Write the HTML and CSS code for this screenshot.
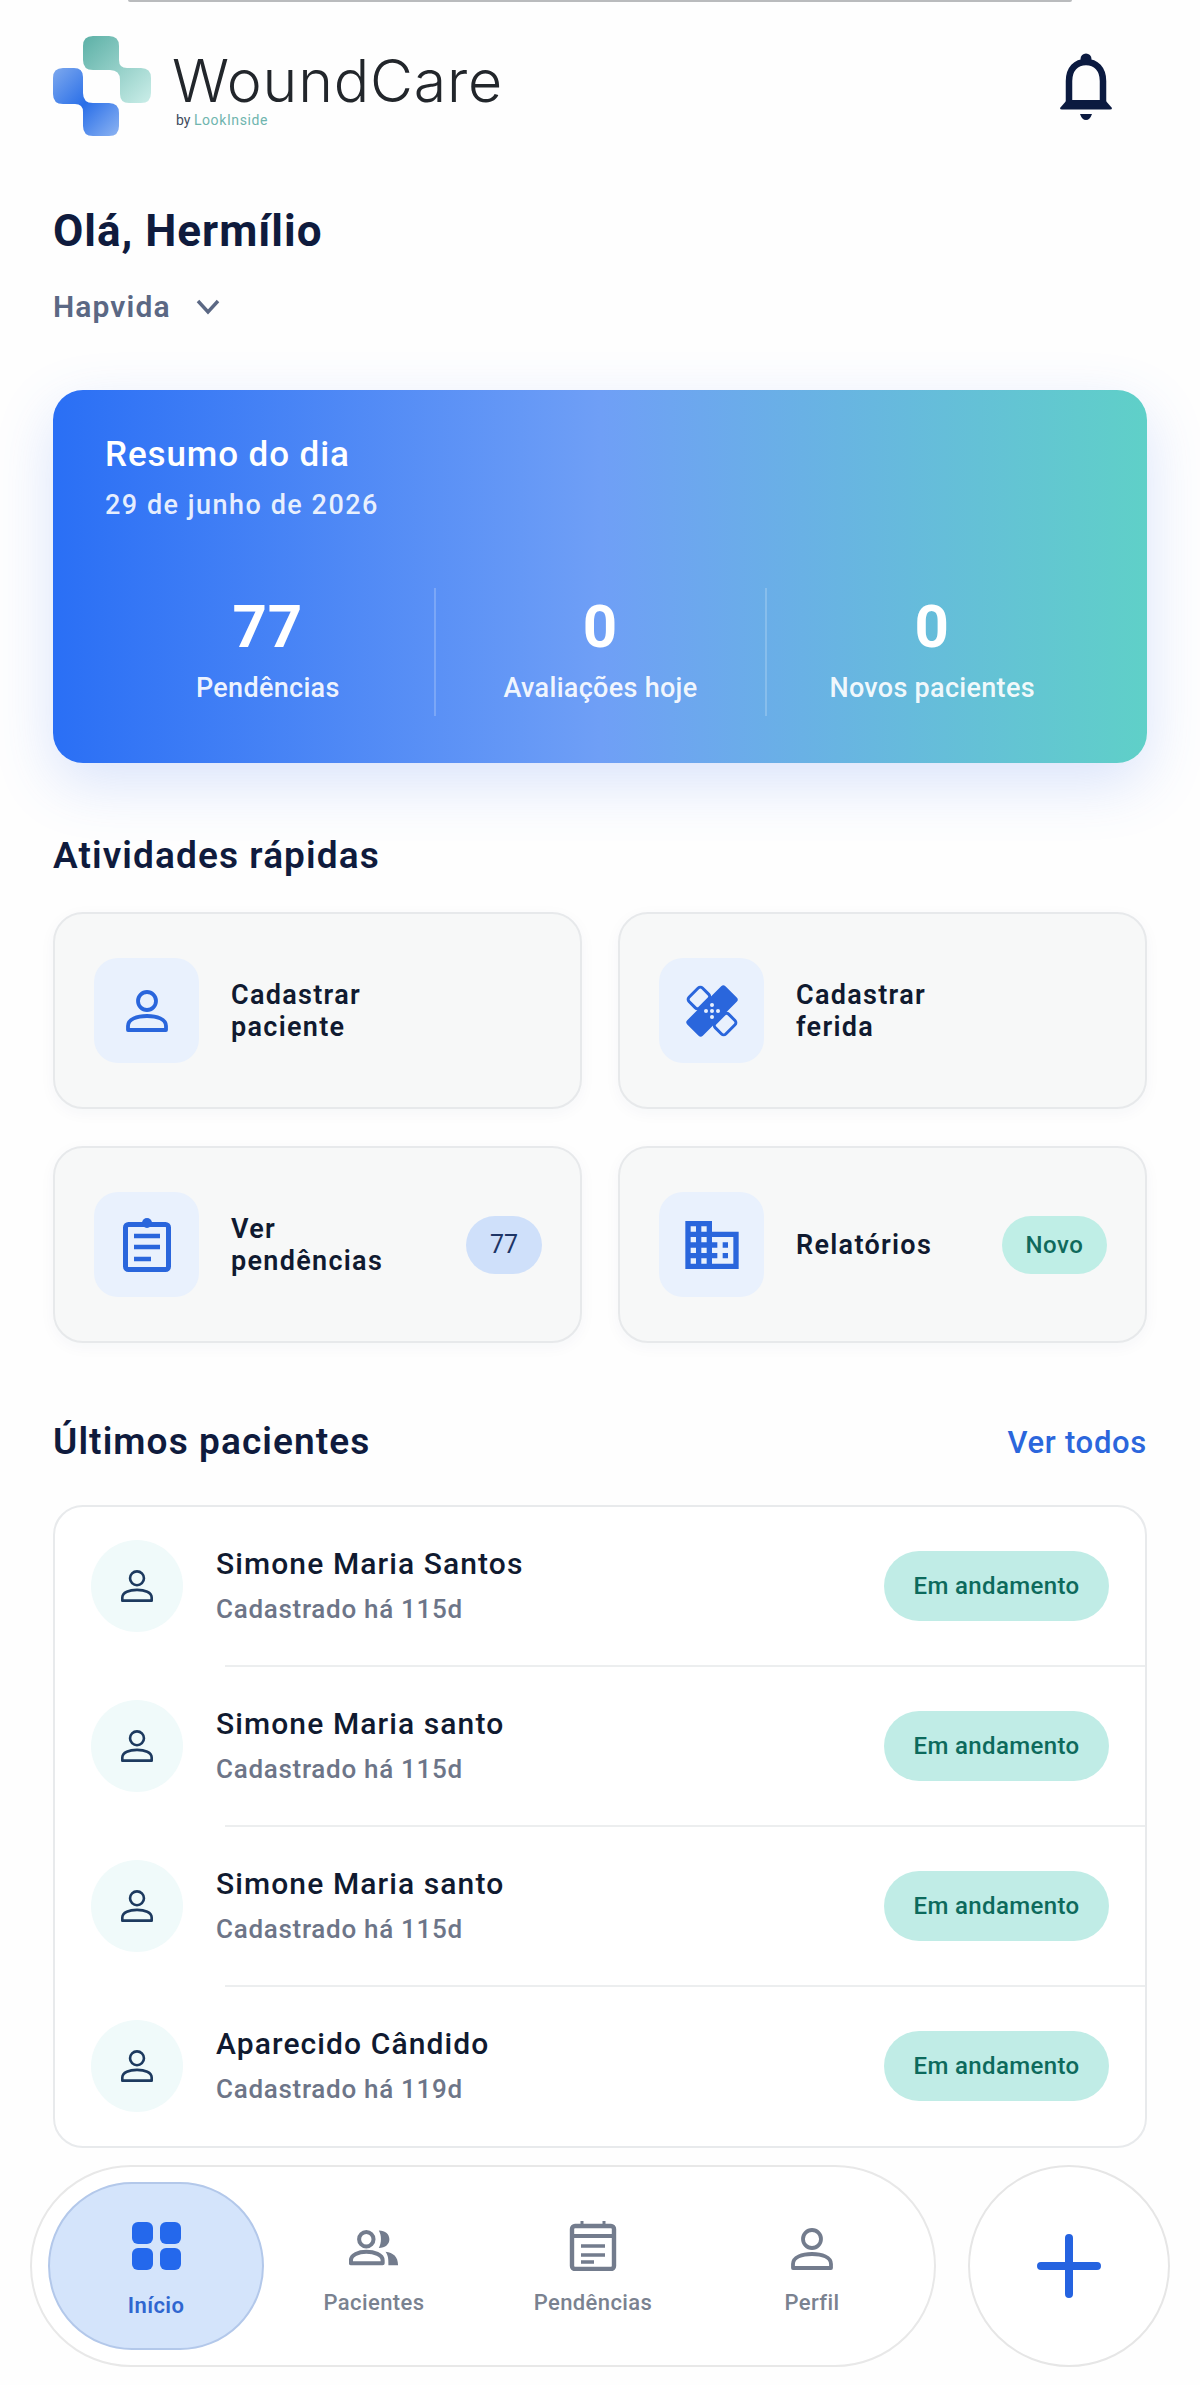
FILE: index.html
```html
<!DOCTYPE html>
<html lang="pt-BR">
<head>
  <meta charset="UTF-8" />
  <title>WoundCare</title>
  <link rel="stylesheet" href="styles.css">
</head>
<body>
  <svg class="defs" width="0" height="0">
    <defs>
      <linearGradient id="logoTeal" x1="0" y1="0" x2="1" y2="1">
        <stop offset="0" stop-color="#5cb0a6" />
        <stop offset="1" stop-color="#cbeee9" />
      </linearGradient>
      <linearGradient id="logoBlue" x1="0" y1="0" x2="1" y2="1">
        <stop offset="0" stop-color="#7ea9ee" />
        <stop offset="0.5" stop-color="#2a6fe8" />
        <stop offset="1" stop-color="#8db4f2" />
      </linearGradient>
      <symbol id="person" viewBox="0 0 44 44">
        <circle cx="22" cy="12" r="9" fill="none" stroke="currentColor" />
        <path d="M3 41V37C3 30 12 27 22 27C32 27 41 30 41 37V41Z" fill="none" stroke="currentColor" stroke-linejoin="round" />
      </symbol>
    </defs>
  </svg>

  <div class="top-sliver"></div>

  <main class="page">
    <header class="top">
      <div class="brand">
        <svg class="logo" viewBox="0 0 98 100">
          <path fill="url(#logoTeal)" d="M30 10Q30 0 40 0H56Q66 0 66 10V24Q66 32 74 32H88Q98 32 98 42V57Q98 67 88 67H76Q67 67 67 58V44Q67 34 57 34H40Q30 34 30 24Z" />
          <path fill="url(#logoBlue)" d="M0 42Q0 32 10 32H21Q30 32 30 41V57Q30 67 40 67H56Q66 67 66 77V90Q66 100 56 100H40Q30 100 30 90V76Q30 68 22 68H10Q0 68 0 58Z" />
        </svg>
        <div class="brand-text">
          <div class="brand-name">WoundCare</div>
          <div class="brand-by">by <span>LookInside</span></div>
        </div>
      </div>
      <svg class="bell" viewBox="0 0 52 67">
        <circle cx="26" cy="6" r="5.5" fill="#0b1a40" />
        <path d="M9 52V28C9 16 16 9 26 9C36 9 43 16 43 28V52" fill="none" stroke="#0b1a40" stroke-width="6.5" />
        <path d="M0 55L7 47H45L52 55Q52 56.500 50 56.500H2Q0 56.500 0 55Z" fill="#0b1a40" />
        <path d="M20 61H32Q30 67 26 67Q22 67 20 61Z" fill="#0b1a40" />
      </svg>
    </header>

    <h1 class="greeting">Olá, Hermílio</h1>
    <div class="company">
      <span>Hapvida</span>
      <svg class="chevron" viewBox="0 0 24 16"><path d="M2 2L12 13L22 2" fill="none" stroke="#5b6884" stroke-width="3.4" /></svg>
    </div>

    <section class="hero">
      <div class="hero-title">Resumo do dia</div>
      <div class="hero-date">29 de junho de 2026</div>
      <div class="stats">
        <div class="stat">
          <div class="stat-num">77</div>
          <div class="stat-label">Pendências</div>
        </div>
        <div class="stat">
          <div class="stat-num">0</div>
          <div class="stat-label">Avaliações hoje</div>
        </div>
        <div class="stat">
          <div class="stat-num">0</div>
          <div class="stat-label">Novos pacientes</div>
        </div>
      </div>
    </section>

    <h2 class="section-title quick-title">Atividades rápidas</h2>
    <div class="quick-grid">
      <div class="quick-card">
        <div class="quick-icon"><svg class="ic-person"><use href="#person" /></svg></div>
        <div class="quick-text">Cadastrar<br>paciente</div>
      </div>
      <div class="quick-card">
        <div class="quick-icon">
          <svg class="ic-bandage" viewBox="-27 -27 54 54">
            <g transform="rotate(45)">
              <rect x="-26" y="-9.500" width="15" height="19" rx="3" fill="none" stroke="#2a66dc" stroke-width="3" />
              <rect x="11" y="-9.500" width="15" height="19" rx="3" fill="none" stroke="#2a66dc" stroke-width="3" />
            </g>
            <g transform="rotate(-45)">
              <rect x="-27" y="-11" width="54" height="22" rx="3" fill="#2a66dc" />
            </g>
            <g fill="#e8f0fd">
              <circle cx="0" cy="-6" r="2" /><circle cx="-6" cy="0" r="2" /><circle cx="6" cy="0" r="2" />
              <circle cx="0" cy="6" r="2" /><circle cx="0" cy="0" r="2" />
            </g>
          </svg>
        </div>
        <div class="quick-text">Cadastrar<br>ferida</div>
      </div>
      <div class="quick-card">
        <div class="quick-icon">
          <svg class="ic-clip" viewBox="0 0 48 54">
            <rect x="2.500" y="6.500" width="43" height="45" rx="3" fill="none" stroke="#2a66dc" stroke-width="5" />
            <circle cx="24" cy="5" r="5" fill="#2a66dc" />
            <path d="M11 18H37M11 29H37M11 41H28" fill="none" stroke="#2a66dc" stroke-width="4.500" />
          </svg>
        </div>
        <div class="quick-text">Ver<br>pendências</div>
        <div class="badge badge-blue">77</div>
      </div>
      <div class="quick-card">
        <div class="quick-icon">
          <svg class="ic-domain" viewBox="2 3 20 18"><path fill="#2a66dc" d="M12 7V3H2v18h20V7H12zM6 19H4v-2h2v2zm0-4H4v-2h2v2zm0-4H4V9h2v2zm0-4H4V5h2v2zm4 12H8v-2h2v2zm0-4H8v-2h2v2zm0-4H8V9h2v2zm0-4H8V5h2v2zm10 12h-8v-2h2v-2h-2v-2h2v-2h-2V9h8v10zm-2-8h-2v2h2v-2zm0 4h-2v2h2v-2z" /></svg>
        </div>
        <div class="quick-text">Relatórios</div>
        <div class="badge badge-green">Novo</div>
      </div>
    </div>

    <div class="list-head">
      <h2 class="section-title">Últimos pacientes</h2>
      <span class="see-all">Ver todos</span>
    </div>
    <div class="patients">
      <div class="patient">
        <div class="avatar"><svg class="ic-avatar"><use href="#person" /></svg></div>
        <div class="patient-info">
          <div class="patient-name">Simone Maria Santos</div>
          <div class="patient-sub">Cadastrado há 115d</div>
        </div>
        <div class="status">Em andamento</div>
      </div>
      <div class="divider"></div>
      <div class="patient">
        <div class="avatar"><svg class="ic-avatar"><use href="#person" /></svg></div>
        <div class="patient-info">
          <div class="patient-name">Simone Maria santo</div>
          <div class="patient-sub">Cadastrado há 115d</div>
        </div>
        <div class="status">Em andamento</div>
      </div>
      <div class="divider"></div>
      <div class="patient">
        <div class="avatar"><svg class="ic-avatar"><use href="#person" /></svg></div>
        <div class="patient-info">
          <div class="patient-name">Simone Maria santo</div>
          <div class="patient-sub">Cadastrado há 115d</div>
        </div>
        <div class="status">Em andamento</div>
      </div>
      <div class="divider"></div>
      <div class="patient">
        <div class="avatar"><svg class="ic-avatar"><use href="#person" /></svg></div>
        <div class="patient-info">
          <div class="patient-name">Aparecido Cândido</div>
          <div class="patient-sub">Cadastrado há 119d</div>
        </div>
        <div class="status">Em andamento</div>
      </div>
    </div>
  </main>

  <nav class="bottom">
    <div class="tabs">
      <div class="tab tab-active">
        <svg class="tab-icon" viewBox="0 0 50 50">
          <rect x="1" y="1" width="21" height="22" rx="6" fill="#2468ec" />
          <rect x="29" y="1" width="21" height="22" rx="6" fill="#2468ec" />
          <rect x="1" y="27" width="21" height="22" rx="6" fill="#2468ec" />
          <rect x="29" y="27" width="21" height="22" rx="6" fill="#2468ec" />
        </svg>
        <div class="tab-label">Início</div>
      </div>
      <div class="tab">
        <svg class="tab-icon" viewBox="0 0 52 50">
          <circle cx="18" cy="18" r="7.500" fill="none" stroke="#737c8d" stroke-width="4.200" />
          <path d="M2 43V40C2 34 10 31 18 31C26 31 35 34 35 40V43Z" fill="none" stroke="#737c8d" stroke-width="4.200" stroke-linejoin="round" />
          <path d="M31 9C38 9 42 13 42 18C42 23 38 27 31 27C34 22 34 14 31 9Z" fill="#737c8d" />
          <path d="M38 31C46 32 51 36 51 45H41C41 39 41 35 38 31Z" fill="#737c8d" />
        </svg>
        <div class="tab-label">Pacientes</div>
      </div>
      <div class="tab">
        <svg class="tab-icon" viewBox="0 0 46 50">
          <rect x="2" y="5" width="42" height="43" rx="3" fill="none" stroke="#737c8d" stroke-width="4.400" />
          <path d="M2 15H44" fill="none" stroke="#737c8d" stroke-width="4" />
          <path d="M12 0V6M34 0V6" fill="none" stroke="#737c8d" stroke-width="3" />
          <path d="M11 25H35M11 34H35M11 41H24" fill="none" stroke="#737c8d" stroke-width="3.400" />
        </svg>
        <div class="tab-label">Pendências</div>
      </div>
      <div class="tab">
        <svg class="ic-tab-person"><use href="#person" /></svg>
        <div class="tab-label">Perfil</div>
      </div>
    </div>
    <div class="add-btn">
      <svg class="ic-plus" viewBox="0 0 64 64"><path d="M32 4V60M4 32H60" fill="none" stroke="#2563e0" stroke-width="8" stroke-linecap="round" /></svg>
    </div>
  </nav>
</body>
</html>
```

FILE: styles.css
```css
* {
  box-sizing: border-box;
}

body {
  margin: 0;
  background: #fefefe;
  color: #0f1b3d;
  font-family: Roboto, "Liberation Sans", sans-serif;
}

.defs {
  display: block;
  height: 0;
}

.top-sliver {
  height: 2px;
  margin: 0 128px;
  background: #b9bbbd;
  border-radius: 0 0 4px 4px;
}

.page {
  padding: 0 53px;
}

.top {
  display: flex;
  align-items: center;
  justify-content: space-between;
  height: 100px;
  margin-top: 34px;
}

.brand {
  display: flex;
  align-items: flex-start;
  gap: 21px;
}

.logo {
  width: 98px;
  height: 100px;
  flex: none;
}

.brand-text {
  padding-top: 15px;
}

.brand-name {
  font-family: Inter, sans-serif;
  font-size: 59px;
  font-weight: 300;
  line-height: 60px;
  letter-spacing: 0.8px;
  color: #22262b;
}

.brand-by {
  margin: 1px 0 0 4px;
  font-size: 14px;
  line-height: 16px;
  color: #3f4b5c;
}

.brand-by span {
  color: #6fb5ae;
  letter-spacing: 0.6px;
}

.bell {
  width: 52px;
  height: 67px;
  margin-right: 35px;
}

.greeting {
  margin: 70px 0 0;
  font-size: 44px;
  font-weight: 700;
  line-height: 50px;
  letter-spacing: 1px;
}

.company {
  display: flex;
  align-items: center;
  gap: 25px;
  margin-top: 33px;
  font-size: 30px;
  font-weight: 600;
  line-height: 36px;
  letter-spacing: 1.1px;
  color: #5b6884;
}

.chevron {
  width: 24px;
  height: 16px;
}

.hero {
  height: 373px;
  margin-top: 65px;
  padding: 46px 50px 0 52px;
  border-radius: 30px;
  background: linear-gradient(90deg, #2a6ff5 0%, #6f9ff6 50%, #5fd0c8 100%);
  box-shadow: 0 20px 60px rgba(70, 120, 240, 0.2);
  color: #fff;
}

.hero-title {
  font-size: 35px;
  font-weight: 500;
  line-height: 38px;
  letter-spacing: 0.9px;
}

.hero-date {
  margin-top: 16px;
  font-size: 27px;
  font-weight: 500;
  line-height: 30px;
  letter-spacing: 1.5px;
  color: rgba(255, 255, 255, 0.88);
}

.stats {
  display: grid;
  grid-template-columns: repeat(3, 1fr);
  height: 128px;
  margin: 68px 0 0 -3px;
}

.stat {
  padding-top: 4px;
  text-align: center;
}

.stat + .stat {
  border-left: 2px solid rgba(255, 255, 255, 0.2);
}

.stat-num {
  font-size: 60px;
  font-weight: 700;
  line-height: 70px;
  letter-spacing: 1px;
}

.stat-label {
  margin-top: 10px;
  font-size: 27px;
  font-weight: 500;
  line-height: 32px;
  letter-spacing: 0.3px;
  color: rgba(255, 255, 255, 0.92);
}

.section-title {
  margin: 0;
  font-size: 37px;
  font-weight: 600;
  line-height: 44px;
  letter-spacing: 1.1px;
}

.quick-title {
  margin-top: 71px;
}

.quick-grid {
  display: grid;
  grid-template-columns: 1fr 1fr;
  gap: 37px 36px;
  margin-top: 34px;
}

.quick-card {
  display: flex;
  align-items: center;
  gap: 32px;
  height: 197px;
  padding: 0 38px 0 39px;
  border: 2px solid #e7e9eb;
  border-radius: 30px;
  background: #f7f8f8;
  box-shadow: 0 4px 16px rgba(30, 50, 90, 0.04);
}

.quick-icon {
  display: flex;
  align-items: center;
  justify-content: center;
  width: 105px;
  height: 105px;
  flex: none;
  border-radius: 24px;
  background: #e9f1fd;
}

.ic-person {
  width: 44px;
  height: 44px;
  color: #2a66dc;
  stroke-width: 3.8;
}

.ic-bandage {
  width: 54px;
  height: 54px;
}

.ic-clip {
  width: 48px;
  height: 54px;
}

.ic-domain {
  width: 54px;
  height: 48px;
}

.quick-text {
  flex: 1;
  font-size: 27px;
  font-weight: 600;
  line-height: 32px;
  letter-spacing: 1.3px;
  color: #101a30;
}

.badge {
  display: flex;
  align-items: center;
  justify-content: center;
  height: 58px;
  border-radius: 29px;
  font-size: 25px;
}

.badge-blue {
  width: 76px;
  background: #cfe0fa;
  color: #1d3566;
  font-weight: 400;
}

.badge-green {
  width: 105px;
  background: #bfeee6;
  color: #0f6a5c;
  font-weight: 500;
  font-size: 24px;
  letter-spacing: 0.5px;
}

.list-head {
  display: flex;
  align-items: center;
  justify-content: space-between;
  margin-top: 77px;
}

.see-all {
  font-size: 31px;
  font-weight: 500;
  letter-spacing: 0.7px;
  color: #2b66dc;
}

.patients {
  margin-top: 41px;
  padding-bottom: 1px;
  border: 2px solid #e8eaec;
  border-radius: 30px;
  background: #fff;
}

.patient {
  display: flex;
  align-items: center;
  height: 158px;
  padding: 0 36px;
}

.avatar {
  display: flex;
  align-items: center;
  justify-content: center;
  width: 92px;
  height: 92px;
  flex: none;
  border-radius: 50%;
  background: #f0fafa;
}

.ic-avatar {
  width: 34px;
  height: 34px;
  color: #1d3a5f;
  stroke-width: 3.4;
}

.patient-info {
  flex: 1;
  margin-left: 33px;
  padding-bottom: 2px;
}

.patient-name {
  font-size: 30px;
  font-weight: 500;
  line-height: 36px;
  letter-spacing: 1.1px;
  color: #101a30;
}

.patient-sub {
  margin-top: 11px;
  font-size: 26px;
  font-weight: 500;
  line-height: 32px;
  letter-spacing: 0.7px;
  color: #6d7588;
}

.status {
  display: flex;
  align-items: center;
  justify-content: center;
  width: 225px;
  height: 70px;
  border-radius: 35px;
  background: #c0ece6;
  font-size: 24px;
  font-weight: 500;
  letter-spacing: 0.35px;
  color: #0d6a5c;
}

.divider {
  height: 2px;
  margin-left: 170px;
  background: #eceeef;
}

.bottom {
  display: flex;
  gap: 32px;
  margin-top: 17px;
  padding: 0 30px;
}

.tabs {
  display: flex;
  gap: 1px;
  flex: 1;
  min-width: 0;
  height: 202px;
  padding: 15px 0 15px 16px;
  border: 2px solid #e8e8e8;
  border-radius: 101px;
  background: #fff;
}

.tab {
  display: flex;
  flex-direction: column;
  align-items: center;
  width: 218px;
  height: 168px;
  padding-top: 39px;
}

.tab-active {
  width: 216px;
  padding-top: 37px;
  border: 2px solid #b3c8ea;
  border-radius: 84px;
  background: #d4e4fb;
}

.tab-icon {
  width: 50px;
  height: 50px;
}

.ic-tab-person {
  width: 44px;
  height: 44px;
  margin-top: 6px;
  color: #737c8d;
  stroke-width: 3.8;
}

.tab-label {
  margin-top: 18px;
  font-size: 22px;
  font-weight: 500;
  line-height: 28px;
  letter-spacing: 0.4px;
  color: #7a8290;
}

.tab-active .tab-label {
  margin-top: 21px;
  font-weight: 600;
  color: #2f66d0;
}

.add-btn {
  display: flex;
  align-items: center;
  justify-content: center;
  width: 202px;
  height: 202px;
  flex: none;
  border: 2px solid #e6e6e6;
  border-radius: 50%;
  background: #fff;
}

.ic-plus {
  width: 64px;
  height: 64px;
}
```
